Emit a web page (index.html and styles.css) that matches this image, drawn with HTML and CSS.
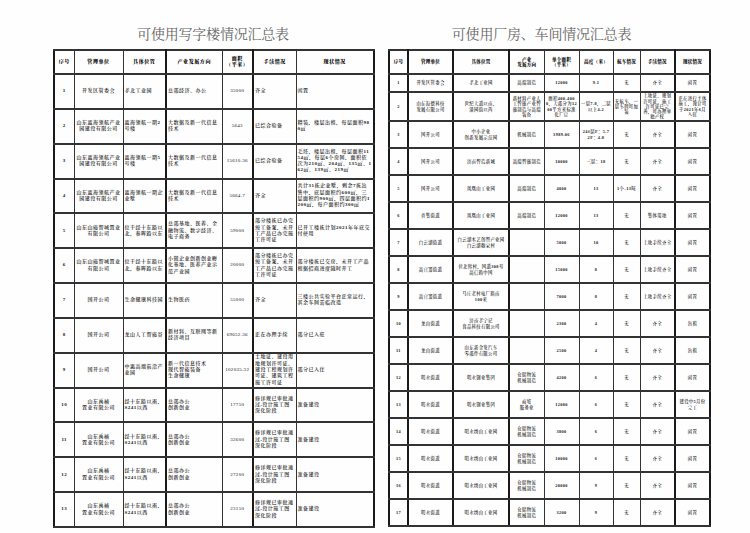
FILE: index.html
```html
<!DOCTYPE html>
<html lang="zh">
<head>
<meta charset="utf-8">
<title>汇总表</title>
<link rel="stylesheet" href="styles.css">
</head>
<body>
<div class="page">
  <section class="sheet sheet-left">
    <h1 class="title">可使用写字楼情况汇总表</h1>
    <table class="tbl lt">
      <colgroup>
        <col style="width:20px"><col style="width:49px"><col style="width:43px"><col style="width:56px"><col style="width:31px"><col style="width:43px"><col style="width:78px">
      </colgroup>
      <thead>
        <tr><th>序号</th><th>管理单位</th><th class="thick-r">具体位置</th><th>产业发展方向</th><th class="thick-r">面积<br>（平米）</th><th>手续情况</th><th>现状情况</th></tr>
      </thead>
      <tbody>
        <tr><td class="c">1</td><td class="c">开发区管委会</td><td class="thick-r">孝北工业园</td><td>总部经济、办公</td><td class="n thick-r">35000</td><td>齐全</td><td>闲置</td></tr>
        <tr><td class="c">2</td><td class="c">山东蓝海领航产业园建设有限公司</td><td class="thick-r">蓝海领航一期2号楼</td><td>大数据及新一代信息技术</td><td class="n thick-r">5643</td><td>已综合验备</td><td>精装，楼层出租，每层面积980㎡</td></tr>
        <tr><td class="c">3</td><td class="c">山东蓝海领航产业园建设有限公司</td><td class="thick-r">蓝海领航一期5号楼</td><td>大数据及新一代信息技术</td><td class="n thick-r">15610.36</td><td>已综合验备</td><td>毛坯，楼层出租，每层面积1154㎡，每层6个房间，面积依次为210㎡、204㎡、135㎡、162㎡、139㎡、219㎡</td></tr>
        <tr><td class="c">4</td><td class="c">山东蓝海领航产业园建设有限公司</td><td class="thick-r">蓝海领航一期企业墅</td><td>大数据及新一代信息技术</td><td class="n thick-r">5664.7</td><td>齐全</td><td>共计31栋企业墅，剩余7栋出售中，底层面积约600㎡，三层面积约900㎡，四层面积约1200㎡，每户面积约300㎡</td></tr>
        <tr><td class="c">5</td><td class="c">山东山能智城置业有限公司</td><td class="thick-r">位于经十东路以北，春晖路以东</td><td>总部基地、医养、金融物流、数字经济、电子商务</td><td class="n thick-r">59000</td><td>部分楼栋已办完竣工备案，未开工产品已办完施工许可证</td><td>已开工楼栋计划2021年年底交付使用</td></tr>
        <tr><td class="c">6</td><td class="c">山东山能智城置业有限公司</td><td class="thick-r">位于经十东路以北，春晖路以东</td><td>小微企业创新创业孵化基地、医养产业示范产业园</td><td class="n thick-r">20000</td><td>部分楼栋已办完竣工备案，未开工产品已办完施工许可证</td><td>部分楼栋已交房，未开工产品根据招商进度随时开工</td></tr>
        <tr><td class="c">7</td><td class="c">国开公司</td><td class="thick-r">生命健康科技园</td><td>生物医药</td><td class="n thick-r">55000</td><td>齐全</td><td>三楼公共实验平台正常运行，其余车间需临改造</td></tr>
        <tr><td class="c">8</td><td class="c">国开公司</td><td class="thick-r">龙山人工智能谷</td><td>新材料、互联网等新经济项目</td><td class="n thick-r">69652.36</td><td>正在办理手续</td><td>部分已入驻</td></tr>
        <tr><td class="c">9</td><td class="c">国开公司</td><td class="thick-r">中惠高端前沿产业园</td><td>新一代信息技术<br>现代智能装备<br>生命健康</td><td class="n thick-r">102035.32</td><td>土地证、建设用地规划许可证、建设工程规划许可证、建筑工程施工许可证</td><td>部分已入住</td></tr>
        <tr><td class="c">10</td><td class="c">山东禹楠<br>置业有限公司</td><td class="thick-r">经十东路以南，S241以西</td><td>总部办公<br>创新创业</td><td class="n thick-r">17750</td><td>修详规已审批通过,设计施工图深化阶段</td><td>准备建设</td></tr>
        <tr><td class="c">11</td><td class="c">山东禹楠<br>置业有限公司</td><td class="thick-r">经十东路以南，S241以西</td><td>总部办公<br>创新创业</td><td class="n thick-r">32600</td><td>修详规已审批通过,设计施工图深化阶段</td><td>准备建设</td></tr>
        <tr><td class="c">12</td><td class="c">山东禹楠<br>置业有限公司</td><td class="thick-r">经十东路以南，S241以西</td><td>总部办公<br>创新创业</td><td class="n thick-r">27200</td><td>修详规已审批通过,设计施工图深化阶段</td><td>准备建设</td></tr>
        <tr><td class="c">13</td><td class="c">山东禹楠<br>置业有限公司</td><td class="thick-r">经十东路以南，S241以西</td><td>总部办公<br>创新创业</td><td class="n thick-r">23150</td><td>修详规已审批通过,设计施工图深化阶段</td><td>准备建设</td></tr>
      </tbody>
    </table>
  </section>

  <section class="sheet sheet-right">
    <h1 class="title title-right">可使用厂房、车间情况汇总表</h1>
    <table class="tbl rt">
      <colgroup>
        <col style="width:19px"><col style="width:45px"><col style="width:56px"><col style="width:35px"><col style="width:35px"><col style="width:34px"><col style="width:27px"><col style="width:35px"><col style="width:35px">
      </colgroup>
      <thead>
        <tr><th class="thick-r">序号</th><th class="thick-r">管理单位</th><th class="thick-r">具体位置</th><th>产业<br>发展方向</th><th>单个面积<br>（平米）</th><th>高度（米）</th><th>航车情况</th><th class="thick-r">手续情况</th><th>现状情况</th></tr>
      </thead>
      <tbody>
        <tr class="r1"><td class="thick-r">1</td><td class="thick-r">开发区管委会</td><td class="thick-r">孝北工业园</td><td>高端制造</td><td>12000</td><td>9.1</td><td>无</td><td class="thick-r">齐全</td><td>闲置</td></tr>
        <tr class="r2"><td class="thick-r">2</td><td class="thick-r">山东海德科技<br>发展有限公司</td><td class="thick-r">世纪大道以南，<br>潘园街以西</td><td>新材料产业人工智能产业智能制造与高端装备</td><td>面积400-4000，大部分为1200平方米标准化厂房</td><td>一层7.8，二层以上4.2</td><td>无航车，一层车间可加装</td><td class="thick-r">土地证、规划许可证、施工许可证已完善，可办理单独产权</td><td>正在进行主体施工，预计可于2021年6月入驻</td></tr>
        <tr><td class="thick-r">3</td><td class="thick-r">国开公司</td><td class="thick-r">中小企业<br>创新发展示范园</td><td>机械制造</td><td>3989.06</td><td>24#层F：5.7<br>2F：4.8</td><td>无</td><td class="thick-r">齐全</td><td>闲置</td></tr>
        <tr><td class="thick-r">4</td><td class="thick-r">国开公司</td><td class="thick-r">济南智造新城</td><td>高端智能制造</td><td>10000</td><td>三层：18</td><td>无</td><td class="thick-r">齐全</td><td>闲置</td></tr>
        <tr><td class="thick-r">5</td><td class="thick-r">国开公司</td><td class="thick-r">凤凰山工业园</td><td>高端制造</td><td>4000</td><td>13</td><td>1个-13吨</td><td class="thick-r">齐全</td><td>闲置</td></tr>
        <tr><td class="thick-r">6</td><td class="thick-r">普集街道</td><td class="thick-r">凤凰山工业园</td><td>高端制造</td><td>12000</td><td>13</td><td>无</td><td class="thick-r">集体用地</td><td>闲置</td></tr>
        <tr><td class="thick-r">7</td><td class="thick-r">白云湖街道</td><td class="thick-r">白云湖木艺创智产业园<br>白云湖魏家村</td><td></td><td>5000</td><td>10</td><td>无</td><td class="thick-r">土地手续齐全</td><td>闲置</td></tr>
        <tr><td class="thick-r">8</td><td class="thick-r">高官寨街道</td><td class="thick-r">位北韩村，国道308号<br>高信路中国</td><td></td><td>15000</td><td>8</td><td>无</td><td class="thick-r">土地手续齐全</td><td>闲置</td></tr>
        <tr><td class="thick-r">9</td><td class="thick-r">高官寨街道</td><td class="thick-r">马庄老村电厂路南<br>100米</td><td></td><td>7000</td><td>8</td><td>无</td><td class="thick-r">土地手续齐全</td><td>闲置</td></tr>
        <tr><td class="thick-r">10</td><td class="thick-r">龙山街道</td><td class="thick-r">济南孝宇记<br>食品科技有限公司</td><td></td><td>2300</td><td>4</td><td>无</td><td class="thick-r">齐全</td><td>出租</td></tr>
        <tr><td class="thick-r">11</td><td class="thick-r">龙山街道</td><td class="thick-r">山东新金发汽车<br>零部件有限公司</td><td></td><td>2500</td><td>4</td><td>无</td><td class="thick-r">齐全</td><td>出租</td></tr>
        <tr><td class="thick-r">12</td><td class="thick-r">明水街道</td><td class="thick-r">明水钢业集团</td><td>仓储物流<br>机械制造</td><td>4200</td><td>6</td><td>无</td><td class="thick-r">齐全</td><td>闲置</td></tr>
        <tr><td class="thick-r">13</td><td class="thick-r">明水街道</td><td class="thick-r">明水钢业集团</td><td>商贸<br>服务业</td><td>12000</td><td>6</td><td>无</td><td class="thick-r">齐全</td><td>建设中5月份<br>完工</td></tr>
        <tr><td class="thick-r">14</td><td class="thick-r">明水街道</td><td class="thick-r">明水绣山工业园</td><td>仓储物流<br>机械制造</td><td>3800</td><td>6</td><td>无</td><td class="thick-r">齐全</td><td>闲置</td></tr>
        <tr><td class="thick-r">15</td><td class="thick-r">明水街道</td><td class="thick-r">明水绣山工业园</td><td>仓储物流<br>机械制造</td><td>10000</td><td>6</td><td>无</td><td class="thick-r">齐全</td><td>闲置</td></tr>
        <tr><td class="thick-r">16</td><td class="thick-r">明水街道</td><td class="thick-r">明水绣山工业园</td><td>仓储物流<br>机械制造</td><td>20000</td><td>9</td><td>无</td><td class="thick-r">齐全</td><td>闲置</td></tr>
        <tr><td class="thick-r">17</td><td class="thick-r">明水街道</td><td class="thick-r">明水绣山工业园</td><td>仓储物流<br>机械制造</td><td>3200</td><td>9</td><td>无</td><td class="thick-r">齐全</td><td>闲置</td></tr>
      </tbody>
    </table>
  </section>
</div>
</body>
</html>
```

FILE: styles.css
```css
* { box-sizing: border-box; }
html, body { margin: 0; padding: 0; background: #fefefe; }
body { font-family: "Liberation Serif", "Noto Serif CJK SC", "Noto Sans CJK SC", serif; color: #111; }

.page {
  display: flex;
  gap: 15px;
  padding-left: 53px;
}

.sheet-left { width: 320px; }
.sheet-right { width: 321px; }

.title {
  margin: 0;
  height: 49px;
  padding-top: 24px;
  font-size: 14px;
  line-height: 18px;
  font-weight: 400;
  text-align: center;
  color: #666;
  font-family: "Noto Serif CJK SC", "Noto Sans CJK SC", serif;
  letter-spacing: -0.2px;
}
.title-right { padding-right: 14px; }

.tbl {
  border-collapse: collapse;
  table-layout: fixed;
  width: 100%;
  border: 2px solid #1a1a1a;
}
.tbl th, .tbl td {
  border: 1px solid #333;
  border-top-width: 2px;
  border-bottom-width: 2px;
  padding: 0 1px;
  overflow: hidden;
  vertical-align: middle;
  word-break: break-all;
}
.tbl th {
  font-weight: 900;
  text-align: center;
  color: #000;
}
.tbl td { font-weight: 600; }
.tbl .thick-r { border-right: 2px solid #1a1a1a; }

/* left table */
.lt th { font-size: 5px; line-height: 6px; letter-spacing: 0.6px; }
.lt td { font-size: 5px; line-height: 6.3px; letter-spacing: 0.5px; text-align: left; color: #1a1a1a; }
.lt td.c { text-align: center; }
.lt td.n { text-align: center; white-space: nowrap; letter-spacing: 0.3px; font-weight: 400; }
.lt thead tr { height: 24px; }
.lt tbody tr { height: 34.85px; }

/* right table */
.rt th { font-size: 4.5px; line-height: 5.5px; letter-spacing: 0.3px; }
.rt td { font-size: 4.3px; line-height: 5.3px; letter-spacing: 0.4px; text-align: center; color: #1a1a1a; }
.rt thead tr { height: 24px; }
.rt tbody tr { height: 27px; }
.rt tbody tr.r1 { height: 18px; }
.rt tbody tr.r2 { height: 29px; }
```
